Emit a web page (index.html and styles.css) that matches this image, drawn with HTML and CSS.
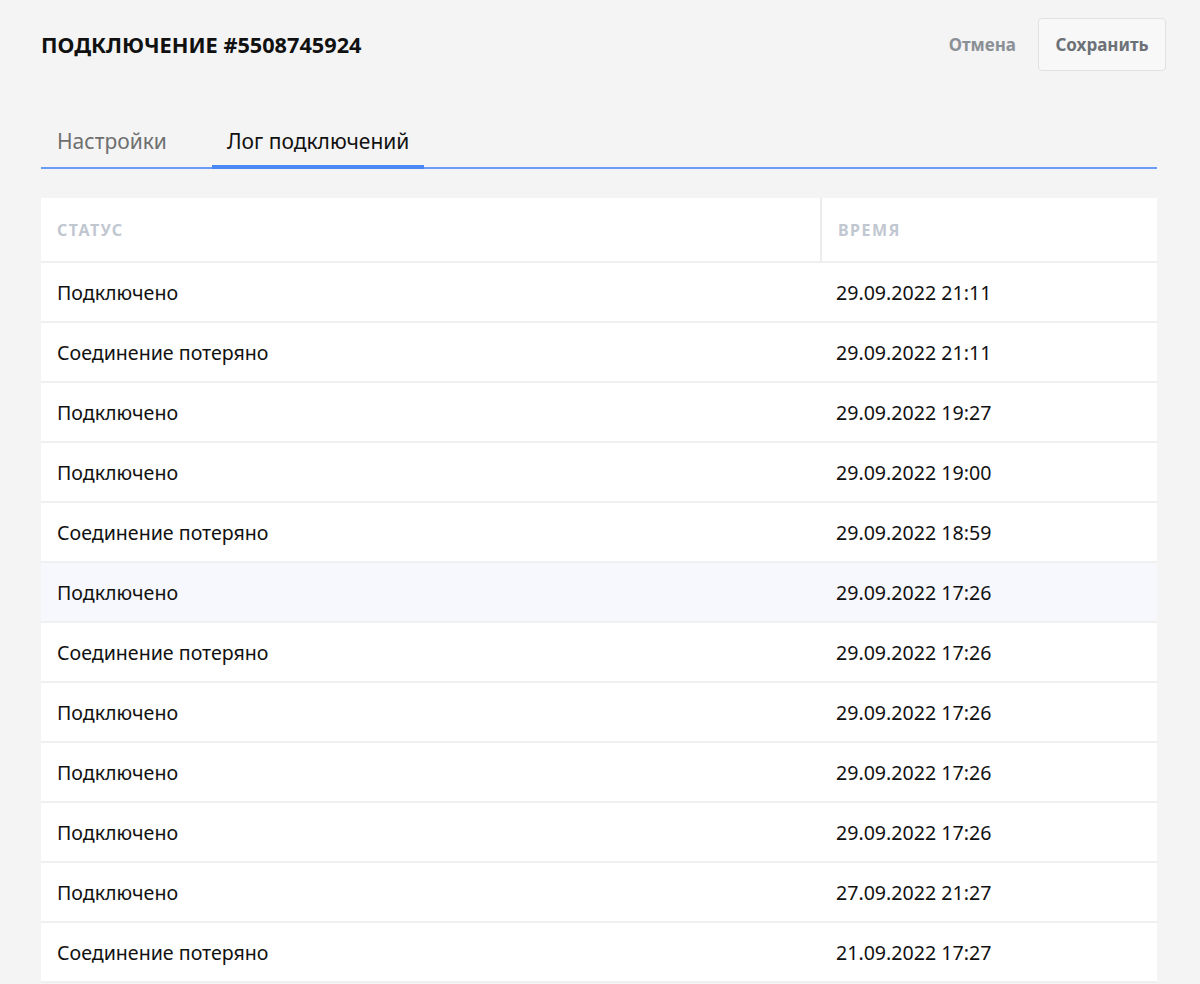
FILE: index.html
```html
<!DOCTYPE html>
<html lang="ru">
<head>
<meta charset="utf-8">
<link rel="stylesheet" href="styles.css">
</head>
<body>
<div class="page">
  <header class="topbar">
    <h1 class="title">ПОДКЛЮЧЕНИЕ #5508745924</h1>
    <div class="actions">
      <button class="btn-link">Отмена</button>
      <button class="btn">Сохранить</button>
    </div>
  </header>
  <nav class="tabs">
    <div class="tab first">Настройки</div>
    <div class="tab active">Лог подключений</div>
  </nav>
  <div class="table">
    <div class="row head">
      <div class="cell c1">СТАТУС</div>
      <div class="cell c2">ВРЕМЯ</div>
    </div>
    <div class="row"><div class="cell c1">Подключено</div><div class="cell c2">29.09.2022 21:11</div></div>
    <div class="row"><div class="cell c1">Соединение потеряно</div><div class="cell c2">29.09.2022 21:11</div></div>
    <div class="row"><div class="cell c1">Подключено</div><div class="cell c2">29.09.2022 19:27</div></div>
    <div class="row"><div class="cell c1">Подключено</div><div class="cell c2">29.09.2022 19:00</div></div>
    <div class="row"><div class="cell c1">Соединение потеряно</div><div class="cell c2">29.09.2022 18:59</div></div>
    <div class="row hover"><div class="cell c1">Подключено</div><div class="cell c2">29.09.2022 17:26</div></div>
    <div class="row"><div class="cell c1">Соединение потеряно</div><div class="cell c2">29.09.2022 17:26</div></div>
    <div class="row"><div class="cell c1">Подключено</div><div class="cell c2">29.09.2022 17:26</div></div>
    <div class="row"><div class="cell c1">Подключено</div><div class="cell c2">29.09.2022 17:26</div></div>
    <div class="row"><div class="cell c1">Подключено</div><div class="cell c2">29.09.2022 17:26</div></div>
    <div class="row"><div class="cell c1">Подключено</div><div class="cell c2">27.09.2022 21:27</div></div>
    <div class="row"><div class="cell c1">Соединение потеряно</div><div class="cell c2">21.09.2022 17:27</div></div>
  </div>
</div>
</body>
</html>
```
FILE: styles.css
```css
html, body {
  margin: 0;
  padding: 0;
  background: #f4f4f4;
  font-family: "Noto Sans", "Open Sans", sans-serif;
  color: #111;
  overflow: hidden;
  height: 984px;
}
.page {
  padding: 18px 34px 0 41px;
}
.topbar {
  display: flex;
  justify-content: space-between;
  align-items: center;
  height: 53px;
}
.title {
  margin: 0;
  font-size: 21.7px;
  font-weight: 700;
  color: #111;
}
.actions {
  display: flex;
  align-items: center;
  gap: 22px;
}
.btn-link {
  border: none;
  background: none;
  font-family: inherit;
  font-size: 17px;
  font-weight: 700;
  color: #8b9096;
  padding: 0;
  cursor: pointer;
}
.btn {
  font-family: inherit;
  font-size: 17px;
  font-weight: 700;
  color: #6c7177;
  background: #f8f8f8;
  border: 1px solid #e1e1e1;
  border-radius: 4px;
  height: 53px;
  width: 128px;
  padding: 0;
}
.tabs {
  display: flex;
  margin-top: 56px;
  margin-right: 9px;
  border-bottom: 2px solid #6b9cf5;
  gap: 30px;
}
.tab {
  font-size: 21px;
  color: #6f6f6f;
  padding: 0 15px 10px;
  line-height: 28px;
  margin-bottom: -2px;
  border-bottom: 4px solid transparent;
}
.tab.first {
  padding-left: 16px;
}
.tab.active {
  color: #111;
  border-bottom-color: #4a88f4;
}
.table {
  margin-top: 29px;
  margin-right: 9px;
  background: #fff;
}
.row {
  display: flex;
  height: 58px;
  border-bottom: 2px solid #f0f0f0;
  align-items: center;
  font-size: 19.6px;
}
.row.head {
  height: 63px;
}
.row.hover {
  background: #f7f8fd;
}
.cell {
  padding-left: 16px;
}
.c1 {
  width: 763px;
  flex: none;
}
.c2 {
  flex: 1;
}
.head .cell {
  font-size: 16px;
  font-weight: 700;
  letter-spacing: 1.5px;
  color: #c1c7d1;
  height: 100%;
  display: flex;
  align-items: center;
}
.head .c1 {
  border-right: 2px solid #ececec;
  box-sizing: border-box;
  width: 781px;
}
```
